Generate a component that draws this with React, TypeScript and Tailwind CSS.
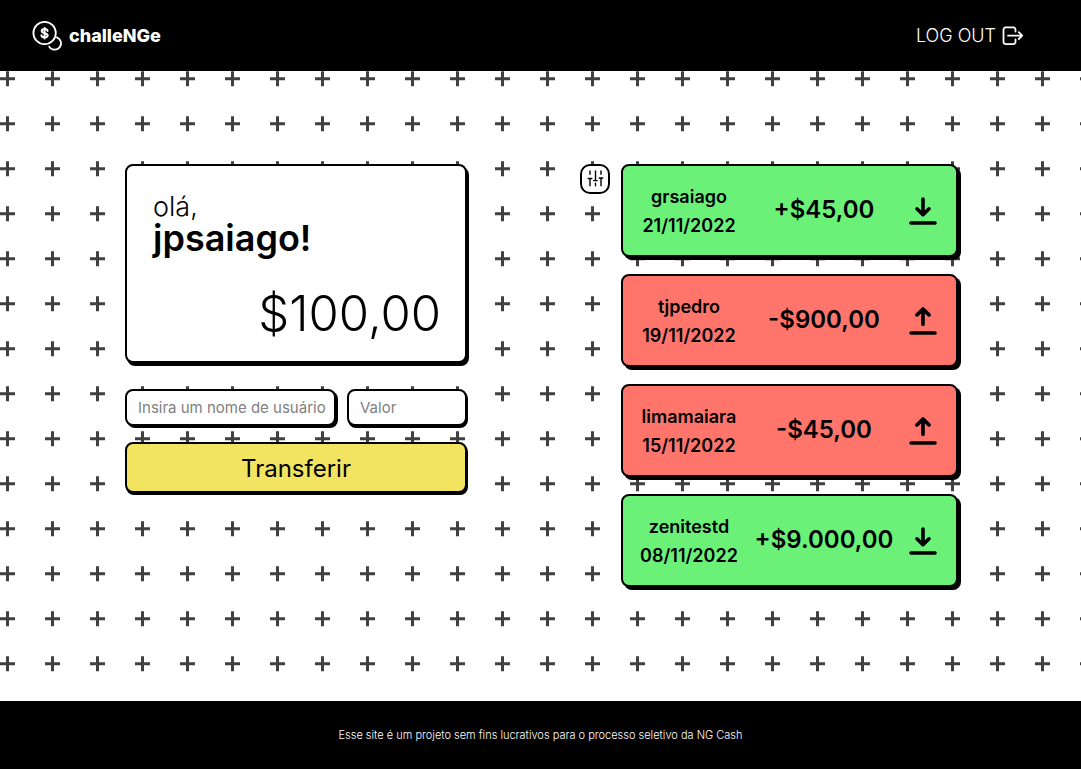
import React from "react";

type Transaction = {
  user: string;
  date: string;
  amount: string;
  kind: "in" | "out";
};

const transactions: Transaction[] = [
  { user: "grsaiago", date: "21/11/2022", amount: "+$45,00", kind: "in" },
  { user: "tjpedro", date: "19/11/2022", amount: "-$900,00", kind: "out" },
  { user: "limamaiara", date: "15/11/2022", amount: "-$45,00", kind: "out" },
  { user: "zenitestd", date: "08/11/2022", amount: "+$9.000,00", kind: "in" },
];

function CoinsIcon() {
  return (
    <svg width="32" height="32" viewBox="0 0 32 32" fill="none" stroke="white" strokeWidth="1.8" strokeLinecap="round" aria-hidden="true">
      <circle cx="13.600" cy="13" r="11.200" />
      <path d="M25.900 17.300A6.400 6.400 0 1 1 18.200 26.600" />
      <path d="M16.600 10.900C16.400 9.700 15.300 9.100 13.600 9.100c-1.700 0-2.900.8-2.900 2 0 2.900 6 1.200 6 4.100 0 1.300-1.200 2.100-3.100 2.100-1.800 0-3-.8-3.200-2M13.600 7.900v10.600" strokeWidth="2" />
    </svg>
  );
}

function LogOutIcon() {
  return (
    <svg width="22" height="20" viewBox="0 0 22 20" fill="none" stroke="currentColor" strokeWidth="1.8" strokeLinecap="round" strokeLinejoin="round" aria-hidden="true">
      <path d="M13.500 5.500V3.600A2.200 2.200 0 0 0 11.300 1.400H3.700A2.200 2.200 0 0 0 1.500 3.600v12.300a2.200 2.200 0 0 0 2.200 2.200h7.600a2.200 2.200 0 0 0 2.200-2.200V13.500M6 9.600H20M16.800 6.200 20.200 9.600l-3.400 3.400" />
    </svg>
  );
}

function SlidersIcon() {
  return (
    <svg width="18" height="18" viewBox="0 0 18 18" fill="none" stroke="black" strokeWidth="1.400" strokeLinecap="round" aria-hidden="true">
      <path d="M4 1v3.200M4 8.500v7.200M2.200 8.500h3.600M9.500 1v9.600M7.700 10.600h3.600M9.500 13.200v2.500M15 1v3.200M15 8v7.700M13.200 8h3.600" />
    </svg>
  );
}

function ArrowIcon({ kind }: { kind: Transaction["kind"] }) {
  return (
    <svg width="28" height="28" viewBox="0 0 28 28" fill="none" stroke="black" strokeWidth="3.600" strokeLinecap="round" strokeLinejoin="round" role="img" aria-label={kind === "in" ? "Recebido" : "Enviado"}>
      {kind === "in" ? <path d="M14 2v15.500M8 11.800l6 5.900 6-5.900" /> : <path d="M14 17.500V2M8 7.900 14 2l6 5.900" />}
      <path d="M2 26h24" />
    </svg>
  );
}

function CrossPattern() {
  return (
    <svg className="absolute inset-0 h-full w-full" aria-hidden="true">
      <defs>
        <pattern id="crosses" width="45" height="45" patternUnits="userSpaceOnUse">
          <path d="M6 0.300h3v15h-3zM0 6.300h15v3h-15z" fill="#404040" />
        </pattern>
      </defs>
      <rect width="100%" height="100%" fill="url(#crosses)" />
    </svg>
  );
}

function TransactionCard({ user, date, amount, kind }: Transaction) {
  return (
    <li
      className={`grid h-[93px] grid-cols-[100px_1fr_28px] items-center rounded-lg border-2 border-black pl-4 pr-[19px] font-semibold shadow-[3px_3px_0_0_#000] ${
        kind === "in" ? "bg-[#6bf178]" : "bg-[#ff756c]"
      }`}
    >
      <div className="text-center text-lg leading-[29px]">
        <p>{user}</p>
        <p>{date}</p>
      </div>
      <p className="pb-0.5 text-center text-2xl">{amount}</p>
      <ArrowIcon kind={kind} />
    </li>
  );
}

export default function App() {
  return (
    <div className="flex min-h-screen flex-col bg-white font-['Inter',sans-serif] text-black">
      <header className="flex h-[71px] items-center justify-between bg-black pl-[31px] pr-[57px] text-white">
        <a href="#" className="flex items-center gap-1.5 text-lg font-extrabold">
          <CoinsIcon />
          challeNGe
        </a>
        <button type="button" className="flex items-center gap-1.5 text-lg font-light">
          LOG OUT
          <LogOutIcon />
        </button>
      </header>

      <main className="relative flex-1">
        <CrossPattern />
        <div className="relative grid grid-cols-[342fr_378fr] items-start gap-[113px] pb-28 pl-[125px] pr-[123px] pt-[93px]">
          <div>
            <section className="flex h-[199px] flex-col justify-between rounded-lg border-2 border-black bg-white pl-[26px] pr-6 pb-[23px] pt-[26px] shadow-[2px_3px_0_0_#000]">
              <h1>
                <span className="block text-[27px] font-light leading-[30px]">olá,</span>
                <span className="block text-4xl font-semibold leading-8">jpsaiago!</span>
              </h1>
              <p className="text-right text-[49px] font-light leading-[48px]">$100,00</p>
            </section>
            <form className="mt-[26px]" onSubmit={(e) => e.preventDefault()}>
              <div className="grid grid-cols-[211fr_120fr] gap-[11px]">
                <input
                  type="text"
                  aria-label="Insira um nome de usuário"
                  placeholder="Insira um nome de usuário"
                  className="h-[37px] min-w-0 rounded-lg border-2 border-black bg-white pl-[11px] pr-1 text-[15px] shadow-[2px_2px_0_0_#000] outline-none placeholder:text-[#808080]"
                />
                <input
                  type="text"
                  aria-label="Valor"
                  placeholder="Valor"
                  className="h-[37px] min-w-0 rounded-lg border-2 border-black bg-white pl-[11px] pr-1 text-[15px] shadow-[1px_2px_0_0_#000] outline-none placeholder:text-[#808080]"
                />
              </div>
              <button
                type="submit"
                className="mt-4 h-[51px] w-full rounded-lg border-2 border-black bg-[#f2e361] pt-0.5 text-2xl shadow-[1px_2px_0_0_#000]"
              >
                Transferir
              </button>
            </form>
          </div>

          <div className="flex items-start gap-[11px]">
            <button
              type="button"
              aria-label="Filtrar"
              className="flex h-[30px] w-[30px] items-center justify-center rounded-[10px] border-2 border-black bg-white"
            >
              <SlidersIcon />
            </button>
            <ul className="grid flex-1 gap-[17px]">
              {transactions.map((t) => (
                <TransactionCard key={t.date} {...t} />
              ))}
            </ul>
          </div>
        </div>
      </main>

      <footer className="flex h-[68px] items-center justify-center bg-black text-[11px] font-light text-white">
        Esse site é um projeto sem fins lucrativos para o processo seletivo da NG Cash
      </footer>
    </div>
  );
}
